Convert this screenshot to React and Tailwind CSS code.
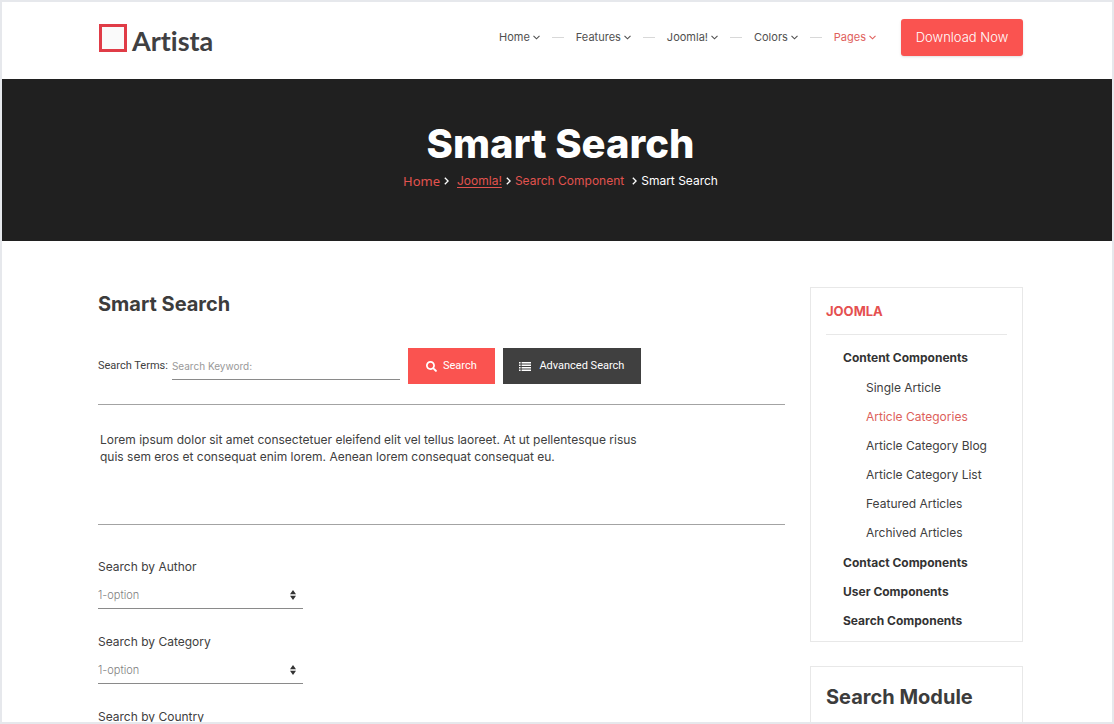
import { useState } from 'react';
import { FaSearch } from 'react-icons/fa';

const navItems = ['Home', 'Features', 'Joomla!', 'Colors', 'Pages'];

const menu = [
  {
    title: 'Content Components',
    items: [
      'Single Article',
      'Article Categories',
      'Article Category Blog',
      'Article Category List',
      'Featured Articles',
      'Archived Articles',
    ],
  },
  { title: 'Contact Components', items: [] },
  { title: 'User Components', items: [] },
  { title: 'Search Components', items: [] },
];

const filters = ['Author', 'Category', 'Country'];

function ChevronDown() {
  return (
    <svg viewBox="0 0 7 5" className="w-[7px] h-[5px]" fill="none" stroke="currentColor" strokeWidth="1.1">
      <path d="M0.5 0.8 3.5 3.8 6.5 0.8" />
    </svg>
  );
}

function ChevronRight() {
  return (
    <svg viewBox="0 0 5 8" className="w-[5px] h-2 text-white shrink-0" fill="none" stroke="currentColor" strokeWidth="1.3">
      <path d="M0.8 0.7 4.1 4 0.8 7.3" />
    </svg>
  );
}

function ListIcon() {
  return (
    <svg viewBox="0 0 12 9" className="w-3 h-[9px]" fill="currentColor">
      <path d="M0 0h1.6v1.5H0zM2.6 0H12v1.5H2.6zM0 2.5h1.6V4H0zM2.6 2.5H12V4H2.6zM0 5h1.6v1.5H0zM2.6 5H12v1.5H2.6zM0 7.5h1.6V9H0zM2.6 7.5H12V9H2.6z" />
    </svg>
  );
}

function SortIcon() {
  return (
    <svg viewBox="0 0 6 10" className="absolute right-[7px] top-2 w-[6px] h-[10px] pointer-events-none" fill="#333">
      <path d="M3 0 6 4.2H0zM3 10 0 5.8h6z" />
    </svg>
  );
}

function Header() {
  return (
    <header className="h-[77px] pl-[97px] pr-[89px] pb-1.5 flex items-center justify-between shrink-0">
      <a href="#" className="flex items-center gap-[5px] text-[#404042]">
        <span className="w-7 h-7 border-[3px] border-[#e03c47] bg-[#fafafa]" />
        <span className="font-['Lato',sans-serif] font-bold text-[27px] leading-8 pt-1.5 [font-variant-ligatures:none]">
          Artista
        </span>
      </a>
      <div className="flex items-center gap-[25px]">
        <nav className="flex items-center gap-3 text-[11px]">
          {navItems.map((item, i) => (
            <div key={item} className="flex items-center gap-3">
              {i > 0 && <span className="w-3 h-px bg-[#d8d8d8]" />}
              <a
                href="#"
                className={`flex items-center gap-[3px] ${item === 'Pages' ? 'text-[#e0605c]' : 'text-[#505050]'}`}
              >
                {item}
                <ChevronDown />
              </a>
            </div>
          ))}
        </nav>
        <button
          type="button"
          className="w-[122px] h-[37px] rounded-[3px] bg-[#fa5350] text-white text-[13px] font-light shadow-sm"
        >
          Download Now
        </button>
      </div>
    </header>
  );
}

function Hero() {
  return (
    <section className="h-[162px] bg-[#202020] pl-[7px] pt-10 shrink-0 flex flex-col items-center">
      <h1 className="text-[40px] leading-[50px] font-extrabold text-white">Smart Search</h1>
      <nav className="flex items-center gap-1 text-[12px] leading-6 text-[#e2534f]">
        <a href="#" className="font-['Noto_Sans',sans-serif] text-[13px]">Home</a>
        <ChevronRight />
        <a href="#" className="ml-1 underline underline-offset-2">Joomla!</a>
        <ChevronRight />
        <a href="#" className="mr-1">Search Component</a>
        <ChevronRight />
        <span className="text-white">Smart Search</span>
      </nav>
    </section>
  );
}

function FilterSelect({ name }) {
  const id = `filter-${name}`;
  return (
    <div className="pb-[23px]">
      <label htmlFor={id} className="block text-[12px] leading-5 text-[#404040]">
        Search by {name}
      </label>
      <div className="relative mt-[5px] w-[205px]">
        <select
          id={id}
          className="block w-full h-[27px] appearance-none border-b border-[#8a8a8a] text-[11px] font-light text-[#808080] outline-none"
        >
          <option>1-option</option>
        </select>
        <SortIcon />
      </div>
    </div>
  );
}

function SearchForm() {
  const [keyword, setKeyword] = useState('');

  return (
    <main className="flex-1 min-w-0 pt-[3px]">
      <h2 className="text-[20px] leading-7 font-bold text-[#3c3c3c]">Smart Search</h2>
      <form onSubmit={(e) => e.preventDefault()} className="mt-[30px] flex items-center font-['Roboto',sans-serif]">
        <label htmlFor="keyword" className="text-[11px] text-[#404040]">Search Terms:</label>
        <input
          id="keyword"
          type="text"
          value={keyword}
          onChange={(e) => setKeyword(e.target.value)}
          placeholder="Search Keyword:"
          className="ml-1 w-[228px] h-7 border-b border-[#8a8a8a] font-['Inter',sans-serif] text-[10px] placeholder:text-[#999] outline-none"
        />
        <button
          type="submit"
          className="ml-2 w-[87px] h-9 bg-[#fa5350] text-white text-[11px] flex items-center justify-center gap-[6px]"
        >
          <FaSearch className="w-[11px] h-[11px]" />
          Search
        </button>
        <button
          type="button"
          className="ml-2 w-[138px] h-9 bg-[#404040] text-white text-[11px] flex items-center justify-center gap-2"
        >
          <ListIcon />
          Advanced Search
        </button>
      </form>
      <div className="mt-5 h-[121px] border-y border-[#a3a3a3] pt-[26px] pl-0.5">
        <p className="max-w-[560px] text-[12px] leading-[17px] text-[#404040]">
          Lorem ipsum dolor sit amet consectetuer eleifend elit vel tellus laoreet. At ut pellentesque risus
          quis sem eros et consequat enim lorem. Aenean lorem consequat consequat eu.
        </p>
      </div>
      <div className="pt-8">
        {filters.map((name) => (
          <FilterSelect key={name} name={name} />
        ))}
      </div>
    </main>
  );
}

function Sidebar() {
  return (
    <aside className="w-[213px] shrink-0">
      <section className="border border-[#e8e8e8] px-[15px] pt-[9px] pb-[6px]">
        <h3 className="h-[38px] pt-0.5 border-b border-[#e8e8e8] text-[13px] leading-6 font-bold text-[#e55050]">JOOMLA</h3>
        <ul className="pt-2 pl-[17px] text-[12px] leading-[29px] text-[#333]">
          {menu.map((group) => (
            <li key={group.title}>
              <a href="#" className="font-bold">{group.title}</a>
              {group.items.length > 0 && (
                <ul className="py-px pl-[23px] text-[#404040]">
                  {group.items.map((item) => (
                    <li key={item}>
                      <a href="#" className={item === 'Article Categories' ? 'text-[#dd5f5b]' : ''}>{item}</a>
                    </li>
                  ))}
                </ul>
              )}
            </li>
          ))}
        </ul>
      </section>
      <section className="mt-6 border border-[#e8e8e8] px-[15px] pt-4 pb-10">
        <h2 className="text-[20px] leading-7 font-bold text-[#3c3c3c]">Search Module</h2>
      </section>
    </aside>
  );
}

export default function App() {
  return (
    <div className="h-screen flex flex-col overflow-hidden border-2 border-[#e6e8ec] bg-white font-['Inter',sans-serif]">
      <Header />
      <Hero />
      <div className="flex-1 min-h-0 overflow-hidden flex items-start gap-[25px] pt-[46px] pl-24 pr-[89px]">
        <SearchForm />
        <Sidebar />
      </div>
    </div>
  );
}
